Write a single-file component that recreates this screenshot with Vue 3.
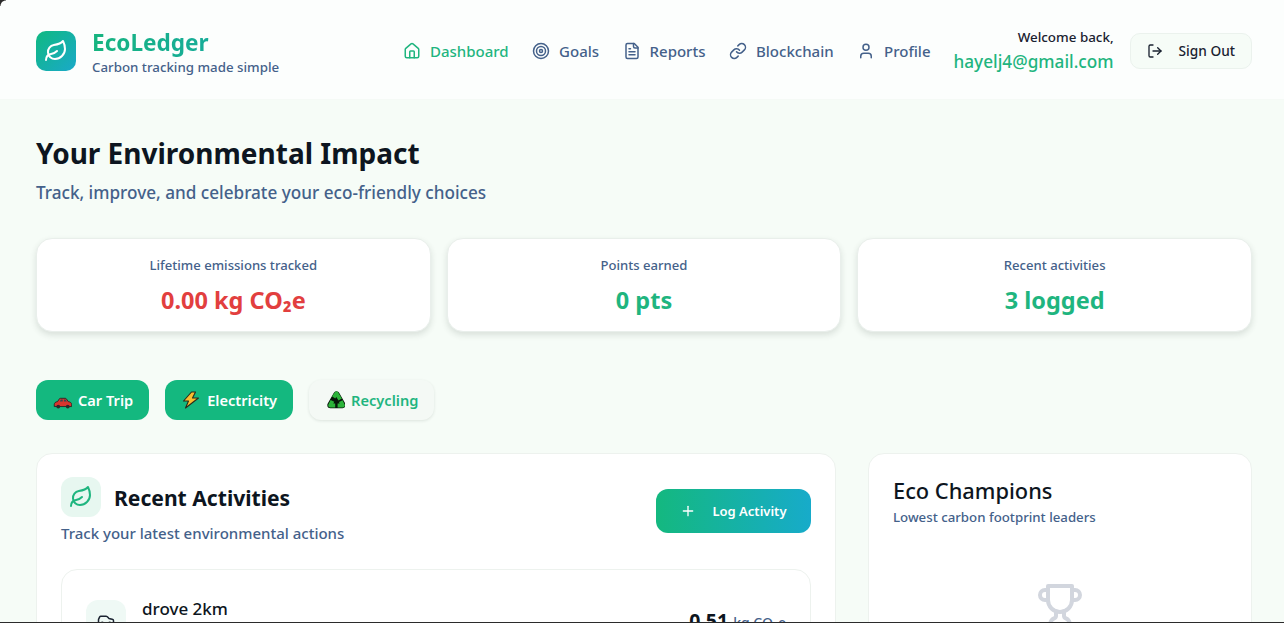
<template>
  <div class="page">
    <header class="topbar">
      <div class="brand">
        <div class="brand-logo">
          <svg viewBox="0 0 24 24" width="24" height="24" class="ico"><path d="M11 20A7 7 0 0 1 9.8 6.1C15.5 5 17 4.48 19 2c1 2 2 4.18 2 8 0 5.5-4.78 10-10 10Z" /><path d="M2 21c0-3 1.85-5.36 5.08-6C9.5 14.52 12 13 13 12" /></svg>
        </div>
        <div>
          <div class="brand-name">EcoLedger</div>
          <div class="brand-sub">Carbon tracking made simple</div>
        </div>
      </div>
      <nav class="nav">
        <a class="nav-link active">
          <svg viewBox="0 0 24 24" width="18" height="18" class="ico"><path d="M15 21v-8a1 1 0 0 0-1-1h-4a1 1 0 0 0-1 1v8" /><path d="M3 10a2 2 0 0 1 .7-1.5l7-6a2 2 0 0 1 2.6 0l7 6a2 2 0 0 1 .7 1.5v9a2 2 0 0 1-2 2H5a2 2 0 0 1-2-2z" /></svg>
          Dashboard
        </a>
        <a class="nav-link">
          <svg viewBox="0 0 24 24" width="18" height="18" class="ico"><circle cx="12" cy="12" r="10" /><circle cx="12" cy="12" r="6" /><circle cx="12" cy="12" r="2" /></svg>
          Goals
        </a>
        <a class="nav-link">
          <svg viewBox="0 0 24 24" width="18" height="18" class="ico"><path d="M15 2H6a2 2 0 0 0-2 2v16a2 2 0 0 0 2 2h12a2 2 0 0 0 2-2V7Z" /><path d="M14 2v4a2 2 0 0 0 2 2h4" /><path d="M10 9H8" /><path d="M16 13H8" /><path d="M16 17H8" /></svg>
          Reports
        </a>
        <a class="nav-link">
          <svg viewBox="0 0 24 24" width="18" height="18" class="ico"><path d="M10 13a5 5 0 0 0 7.54.54l3-3a5 5 0 0 0-7.07-7.07l-1.72 1.71" /><path d="M14 11a5 5 0 0 0-7.54-.54l-3 3a5 5 0 0 0 7.07 7.07l1.71-1.71" /></svg>
          Blockchain
        </a>
        <a class="nav-link">
          <svg viewBox="0 0 24 24" width="18" height="18" class="ico"><path d="M19 21v-2a4 4 0 0 0-4-4H9a4 4 0 0 0-4 4v2" /><circle cx="12" cy="7" r="4" /></svg>
          Profile
        </a>
      </nav>
      <div class="user">
        <div class="user-text">
          <div class="welcome">Welcome back,</div>
          <div class="email">hayelj4@gmail.com</div>
        </div>
        <button class="signout">
          <svg viewBox="0 0 24 24" width="16" height="16" class="ico"><path d="M9 21H5a2 2 0 0 1-2-2V5a2 2 0 0 1 2-2h4" /><path d="m16 17 5-5-5-5" /><path d="M21 12H9" /></svg>
          Sign Out
        </button>
      </div>
    </header>

    <main class="main">
      <h1 class="title">Your Environmental Impact</h1>
      <p class="subtitle">Track, improve, and celebrate your eco-friendly choices</p>

      <section class="stats">
        <div v-for="s in stats" :key="s.label" class="stat">
          <div class="stat-label">{{ s.label }}</div>
          <div class="stat-value" :class="s.tone">{{ s.value }}</div>
        </div>
      </section>

      <section class="quick">
        <button class="chip solid">
          <svg viewBox="0 0 20 20" width="20" height="20" class="emoji">
            <g transform="translate(1.5 2.3) scale(.95)">
              <path d="M.8 13c0-1.9 1.3-2.9 3.5-3.2l1.6-2.6c.4-.6.9-.9 1.6-.9h4.7c.7 0 1.2.3 1.6.9l1.7 2.6c2.1.3 3.6 1.3 3.6 3.2v2H.8z" fill="#d8352e" stroke="#222" stroke-width=".9" />
              <path d="M6.6 9.8l1.2-2.2h1.9v2.2zM11 9.8V7.6h1.7l1.4 2.2z" fill="#3a4750" />
              <circle cx="5" cy="15" r="2" fill="#2a2a2a" />
              <circle cx="15" cy="15" r="2" fill="#2a2a2a" />
            </g>
          </svg>
          Car Trip
        </button>
        <button class="chip solid">
          <svg viewBox="0 0 20 20" width="20" height="20" class="emoji">
            <path d="M10.5 2 2.5 11h5L4.5 18 17.5 8h-6l3-6z" fill="#f9bd2e" stroke="#2a2a1a" stroke-width="1.1" stroke-linejoin="round" />
          </svg>
          Electricity
        </button>
        <button class="chip ghost">
          <svg viewBox="0 0 20 20" width="20" height="20" class="emoji">
            <path d="M11.5 4.5 17.5 15H5.5Z" fill="#07160a" stroke="#07160a" stroke-width="6.4" stroke-linejoin="round" />
            <path d="M8.6 7.4 11.5 3.4 15.2 9.6M15.8 11.2 17.8 15.4H12.6M10.2 15.4H5.2L7.4 10.8" fill="none" stroke="#2cb33a" stroke-width="4" stroke-linejoin="round" />
          </svg>
          Recycling
        </button>
      </section>

      <section class="columns">
        <div class="panel">
          <div class="panel-head">
            <div>
              <div class="panel-title-row">
                <div class="panel-icon">
                  <svg viewBox="0 0 24 24" width="24" height="24" class="ico"><path d="M11 20A7 7 0 0 1 9.8 6.1C15.5 5 17 4.48 19 2c1 2 2 4.18 2 8 0 5.5-4.78 10-10 10Z" /><path d="M2 21c0-3 1.85-5.36 5.08-6C9.5 14.52 12 13 13 12" /></svg>
                </div>
                <h2 class="panel-title">Recent Activities</h2>
              </div>
              <p class="panel-sub">Track your latest environmental actions</p>
            </div>
            <button class="log-btn">
              <svg viewBox="0 0 24 24" width="16" height="16" class="ico"><path d="M5 12h14" /><path d="M12 5v14" /></svg>
              Log Activity
            </button>
          </div>
          <div class="activity">
            <div class="activity-icon">
              <svg viewBox="0 0 24 24" width="18" height="18" class="ico"><path d="M19 17h2c.6 0 1-.4 1-1v-3c0-.9-.7-1.7-1.5-1.9C18.7 10.6 16 10 16 10s-1.3-1.4-2.2-2.3c-.5-.4-1.1-.7-1.8-.7H5c-.6 0-1.1.4-1.4.9l-1.4 2.9A3.7 3.7 0 0 0 2 12v4c0 .6.4 1 1 1h2" /><circle cx="7" cy="17" r="2" /><path d="M9 17h6" /><circle cx="17" cy="17" r="2" /></svg>
            </div>
            <div class="activity-name">drove 2km</div>
            <div class="activity-amount">0.51 <span>kg CO₂e</span></div>
          </div>
        </div>

        <aside class="panel side">
          <h2 class="side-title">Eco Champions</h2>
          <p class="side-sub">Lowest carbon footprint leaders</p>
          <div class="trophy">
            <svg viewBox="0 0 24 24" width="48" height="48" class="ico"><path d="M6 9H4.5a2.5 2.5 0 0 1 0-5H6" /><path d="M18 9h1.5a2.5 2.5 0 0 0 0-5H18" /><path d="M4 22h16" /><path d="M10 14.66V17c0 .55-.47.98-.97 1.21C7.85 18.75 7 20.24 7 22" /><path d="M14 14.66V17c0 .55.47.98.97 1.21C16.15 18.75 17 20.24 17 22" /><path d="M18 2H6v7a6 6 0 0 0 12 0V2Z" /></svg>
          </div>
        </aside>
      </section>
    </main>
  </div>
</template>

<script setup>
const stats = [
  { label: 'Lifetime emissions tracked', value: '0.00 kg CO₂e', tone: 'red' },
  { label: 'Points earned', value: '0 pts', tone: 'green' },
  { label: 'Recent activities', value: '3 logged', tone: 'green' },
]
</script>

<style>
html, body {
  margin: 0;
  height: 100%;
  overflow: hidden;
  background: #f6fcf7;
}
</style>

<style scoped>
.page {
  position: relative;
  height: 623px;
  overflow: hidden;
  background: #f6fcf7;
  font-family: "Noto Sans", "Open Sans", sans-serif;
  color: #0d1520;
}
/* window edge that shows in the capture */
.page::before {
  content: "";
  position: absolute;
  left: 0;
  top: 0;
  width: 6px;
  height: 6px;
  background: radial-gradient(circle at 100% 100%, transparent 5px, #2b2b2b 6px);
}
.page::after {
  content: "";
  position: absolute;
  left: 0;
  right: 0;
  bottom: 0;
  height: 1px;
  background: #2b2b2b;
}
.ico {
  fill: none;
  stroke: currentColor;
  stroke-width: 2;
  stroke-linecap: round;
  stroke-linejoin: round;
  flex: none;
}
.topbar {
  height: 100px;
  box-sizing: border-box;
  padding: 2px 32px 0 36px;
  display: flex;
  align-items: center;
  background: #fcfefd;
  border-bottom: 1px solid #f5faf6;
}
.brand {
  display: flex;
  align-items: center;
  gap: 16px;
}
.brand-logo {
  width: 40px;
  height: 40px;
  border-radius: 10px;
  background: linear-gradient(135deg, #10b981, #1aa9c9);
  color: #fff;
  display: flex;
  align-items: center;
  justify-content: center;
}
.brand-name {
  font-size: 22.6px;
  font-weight: 700;
  line-height: 32px;
  background: linear-gradient(90deg, #16b47f, #17a7a8);
  -webkit-background-clip: text;
  background-clip: text;
  color: transparent;
}
.brand-sub {
  font-size: 13.3px;
  font-weight: 500;
  line-height: 16px;
  color: #44618a;
}
.nav {
  margin-left: auto;
  display: flex;
  align-items: center;
  gap: 23.5px;
}
.nav-link {
  display: flex;
  align-items: center;
  gap: 9px;
  font-size: 15px;
  font-weight: 500;
  color: #44618a;
}
.nav-link.active {
  color: #1fb57f;
}
.user {
  margin-left: 23px;
  display: flex;
  align-items: center;
  gap: 16px;
}
.user-text {
  text-align: right;
}
.welcome {
  font-size: 13.4px;
  font-weight: 500;
  line-height: 22px;
  color: #1a2230;
}
.email {
  font-size: 17.2px;
  font-weight: 500;
  line-height: 28px;
  color: #1fb57f;
}
.signout {
  height: 36px;
  padding: 0 16px;
  display: flex;
  align-items: center;
  gap: 16px;
  background: #f6fcf7;
  border: 1px solid #ebf2ed;
  border-radius: 10px;
  font: 500 13.7px "Noto Sans", sans-serif;
  color: #1a2230;
}
.main {
  padding: 35px 32px 0 36px;
}
.title {
  margin: 0;
  font-size: 28px;
  font-weight: 700;
  line-height: 36px;
  color: #0d1520;
}
.subtitle {
  margin: 9px 0 0;
  font-size: 17.15px;
  font-weight: 500;
  line-height: 26px;
  color: #44618a;
}
.stats {
  margin-top: 32px;
  display: grid;
  grid-template-columns: repeat(3, 1fr);
  gap: 16px;
}
.stat {
  height: 94px;
  box-sizing: border-box;
  padding-top: 16px;
  text-align: center;
  background: #fff;
  border: 1px solid #e9efeb;
  border-radius: 16px;
  box-shadow: 0 3px 6px rgba(40, 60, 50, 0.14);
}
.stat-label {
  font-size: 13.1px;
  font-weight: 500;
  line-height: 20px;
  color: #44618a;
}
.stat-value {
  margin-top: 9px;
  font-size: 23.5px;
  font-weight: 700;
  line-height: 32px;
}
.red {
  color: #e23f3f;
}
.green {
  color: #1fb57f;
}
.quick {
  margin-top: 48px;
  display: flex;
  gap: 16px;
}
.chip {
  height: 40px;
  padding: 0 16px;
  display: flex;
  align-items: center;
  gap: 6px;
  border: none;
  border-radius: 12px;
  font: 600 14.6px "Noto Sans", sans-serif;
}
.chip.solid {
  background: #14b87f;
  color: #fff;
}
.chip.ghost {
  background: #f4f9f5;
  color: #1fb57f;
  box-shadow: 0 1px 3px rgba(40, 60, 50, 0.12);
}
.emoji {
  flex: none;
}
.columns {
  margin-top: 33px;
  display: grid;
  grid-template-columns: 800px 384px;
  gap: 32px;
}
.panel {
  height: 300px;
  box-sizing: border-box;
  padding: 23px 24px 24px;
  background: #fff;
  border: 1px solid #edf2ee;
  border-radius: 16px;
}
.panel-head {
  display: flex;
  justify-content: space-between;
}
.panel-title-row {
  display: flex;
  align-items: center;
  gap: 13px;
}
.panel-icon {
  width: 40px;
  height: 40px;
  border-radius: 12px;
  background: #e7f7f0;
  color: #1fb57f;
  display: flex;
  align-items: center;
  justify-content: center;
}
.panel-title {
  margin: 0;
  padding-top: 1px;
  font-size: 21.1px;
  font-weight: 700;
  color: #0d1520;
}
.panel-sub {
  margin: 5px 0 0;
  font-size: 15px;
  font-weight: 500;
  line-height: 22px;
  color: #44618a;
}
.log-btn {
  margin-top: 12px;
  height: 44px;
  width: 155px;
  display: flex;
  align-items: center;
  justify-content: center;
  gap: 16px;
  border: none;
  border-radius: 12px;
  background: linear-gradient(90deg, #14b87f, #17abca);
  color: #fff;
  font: 600 13px "Noto Sans", sans-serif;
}
.activity {
  margin-top: 25px;
  height: 100px;
  box-sizing: border-box;
  padding: 26px 24px;
  border: 1px solid #edf2ee;
  border-radius: 16px;
  display: flex;
  align-items: flex-start;
  gap: 16px;
}
.activity-icon {
  width: 40px;
  height: 40px;
  margin-top: 4px;
  border-radius: 12px;
  background: #eff9f5;
  color: #1a2230;
  display: flex;
  align-items: center;
  justify-content: center;
}
.activity-name {
  font-size: 17px;
  font-weight: 500;
  line-height: 26px;
  color: #0d1520;
}
.activity-amount {
  margin-left: auto;
  margin-top: 11px;
  font-size: 19.5px;
  font-weight: 700;
  line-height: 28px;
  color: #0d1520;
}
.activity-amount span {
  font-size: 14px;
  font-weight: 500;
  color: #44618a;
}
.side-title {
  margin: 0;
  font-size: 21.8px;
  font-weight: 500;
  line-height: 28px;
  color: #0d1520;
}
.side-sub {
  margin: 3px 0 0;
  font-size: 13.25px;
  font-weight: 500;
  line-height: 18px;
  color: #44618a;
}
.trophy {
  margin-top: 56px;
  display: flex;
  justify-content: center;
  color: #d2d6de;
}
</style>
